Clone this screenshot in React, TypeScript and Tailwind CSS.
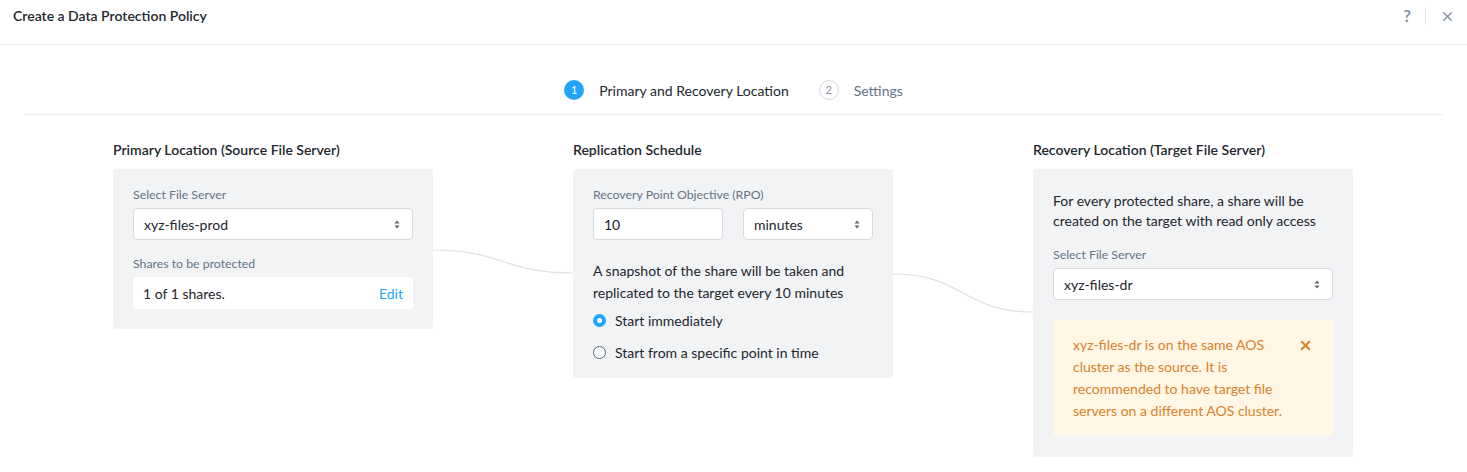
import { X } from 'lucide-react';

const font = { fontFamily: 'Lato, "Open Sans", sans-serif' };

function SelectArrows() {
  return (
    <svg width="6" height="9" viewBox="0 0 6 9" className="text-[#5b6571]">
      <path d="M3 0.5 L5.5 3.5 H0.5 Z" fill="currentColor" />
      <path d="M3 8.5 L5.5 5.5 H0.5 Z" fill="currentColor" />
    </svg>
  );
}

function SelectBox({ value, className = '' }: { value: string; className?: string }) {
  return (
    <div
      className={`h-8 bg-white border border-[#d5dae1] rounded-[4px] flex items-center justify-between pl-[10px] pr-[12px] text-[14px] text-[#22272e] ${className}`}
    >
      <span>{value}</span>
      <SelectArrows />
    </div>
  );
}

function Label({ children }: { children: React.ReactNode }) {
  return <div className="text-[12.3px] text-[#627386] leading-[15px] mb-[6px]">{children}</div>;
}

function Connector({ from, to }: { from: number; to: number }) {
  const h = Math.max(from, to) + 2;
  return (
    <svg width="140" height={h} className="shrink-0" viewBox={`0 0 140 ${h}`}>
      <path
        d={`M0 ${from} C 70 ${from}, 70 ${to}, 140 ${to}`}
        fill="none"
        stroke="#dde1e6"
        strokeWidth="1.2"
      />
    </svg>
  );
}

export default function App() {
  return (
    <div className="w-[1467px] h-[472px] bg-white text-[#22272e] overflow-hidden" style={font}>
      {/* header */}
      <div className="h-[45px] border-b border-[#eceef1] flex items-start justify-between pl-[13px] pr-[12px]">
        <div className="text-[14px] font-semibold mt-[7px] leading-[18px]">Create a Data Protection Policy</div>
        <div className="flex items-center mt-[6px] text-[#8593a3]">
          <span className="text-[17px] font-bold leading-[20px]">?</span>
          <span className="w-px h-[18px] bg-[#e1e5ea] mx-[14px]" />
          <X size={15} strokeWidth={2.4} />
        </div>
      </div>

      {/* stepper */}
      <div className="mx-[24px] h-[70px] border-b border-[#eceef1] flex items-center justify-center gap-[30px] pt-[21px]">
        <div className="flex items-center gap-[15px]">
          <span className="w-[20px] h-[20px] rounded-full bg-[#22a5f7] text-white text-[11px] flex items-center justify-center">1</span>
          <span className="text-[14px] text-[#22272e]">Primary and Recovery Location</span>
        </div>
        <div className="flex items-center gap-[15px]">
          <span className="w-[20px] h-[20px] rounded-full border border-[#d5dae1] text-[#8593a3] text-[11px] flex items-center justify-center">2</span>
          <span className="text-[14px] text-[#627386]">Settings</span>
        </div>
      </div>

      {/* content */}
      <div className="flex pl-[113px]">
        {/* primary */}
        <div className="w-[320px] shrink-0">
          <div className="text-[14px] font-semibold mt-[26px] leading-[18px] h-[28px]">Primary Location (Source File Server)</div>
          <div className="bg-[#f2f3f5] rounded-[3px] px-[20px] pt-[18px] pb-[20px]">
            <Label>Select File Server</Label>
            <SelectBox value="xyz-files-prod" />
            <div className="mt-[16px]">
              <Label>Shares to be protected</Label>
            </div>
            <div className="h-8 bg-white rounded-[3px] flex items-center justify-between px-[10px] text-[14px]">
              <span>1 of 1 shares.</span>
              <span className="text-[#22a5f7]">Edit</span>
            </div>
          </div>
        </div>

        <Connector from={135} to={158} />

        {/* schedule */}
        <div className="w-[320px] shrink-0">
          <div className="text-[14px] font-semibold mt-[26px] leading-[18px] h-[28px]">Replication Schedule</div>
          <div className="bg-[#f2f3f5] rounded-[3px] px-[20px] pt-[18px] pb-[15px]">
            <Label>Recovery Point Objective (RPO)</Label>
            <div className="flex gap-[20px]">
              <div className="w-[130px] h-8 bg-white border border-[#d5dae1] rounded-[4px] flex items-center px-[10px] text-[14px]">10</div>
              <SelectBox value="minutes" className="w-[130px]" />
            </div>
            <div className="text-[14px] leading-[22px] mt-[20px]">
              A snapshot of the share will be taken and replicated to the target every 10 minutes
            </div>
            <div className="flex items-center gap-[9px] text-[14px] mt-[5px] h-[22px]">
              <span className="w-[13px] h-[13px] rounded-full bg-[#22a5f7] flex items-center justify-center">
                <span className="w-[5px] h-[5px] rounded-full bg-white" />
              </span>
              <span>Start immediately</span>
            </div>
            <div className="flex items-center gap-[9px] text-[14px] mt-[10px] h-[22px]">
              <span className="w-[13px] h-[13px] rounded-full border border-[#5b6571] bg-white" />
              <span>Start from a specific point in time</span>
            </div>
          </div>
        </div>

        <Connector from={159} to={197} />

        {/* recovery */}
        <div className="w-[320px] shrink-0">
          <div className="text-[14px] font-semibold mt-[26px] leading-[18px] h-[28px]">Recovery Location (Target File Server)</div>
          <div className="bg-[#f2f3f5] rounded-[3px] px-[20px] pt-[22px] pb-[21px]">
            <div className="text-[14px] leading-[20px]">
              For every protected share, a share will be created on the target with read only access
            </div>
            <div className="mt-[16px]">
              <Label>Select File Server</Label>
            </div>
            <SelectBox value="xyz-files-dr" />
            <div className="mt-[20px] bg-[#fff6e6] px-[20px] pt-[14px] pb-[14px] flex justify-between items-start">
              <div className="text-[14px] leading-[22px] text-[#d9822b] w-[214px]">
                xyz-files-dr is on the same AOS cluster as the source. It is recommended to have target file servers on a different AOS cluster.
              </div>
              <X size={15} strokeWidth={3} className="text-[#d9822b] mt-[4px]" />
            </div>
          </div>
        </div>
      </div>
    </div>
  );
}
